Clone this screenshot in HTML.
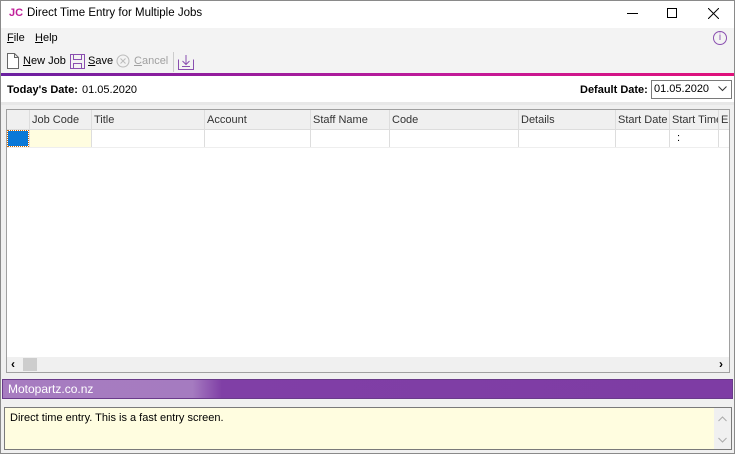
<!DOCTYPE html>
<html><head><style>
*{margin:0;padding:0;box-sizing:border-box}
body{width:735px;height:454px;overflow:hidden;background:#f0f0f0;font-family:"Liberation Sans",sans-serif;font-size:11px;color:#000;position:relative}
.a{position:absolute}
u{text-decoration:underline}
</style></head><body>
<div class="a" style="left:0;top:0;width:735px;height:28px;background:#fff"></div>
<div class="a" style="left:9px;top:7px;font-weight:bold;color:#c0209a;font-size:11px">JC</div>
<div class="a" style="left:27px;top:7px;font-size:11.5px">Direct Time Entry for Multiple Jobs</div>
<div class="a" style="left:627px;top:13px;width:11px;height:1px;background:#000"></div>
<div class="a" style="left:667px;top:8px;width:10px;height:10px;border:1px solid #000"></div>
<svg class="a" style="left:708px;top:8px" width="11" height="11"><path d="M0 0L11 11M11 0L0 11" stroke="#000"/></svg>
<div class="a" style="left:0;top:28px;width:735px;height:45px;background:#f3f3f3"></div>
<div class="a" style="left:7px;top:32px"><u>F</u>ile</div>
<div class="a" style="left:35px;top:32px"><u>H</u>elp</div>
<div class="a" style="left:713px;top:31px;width:14px;height:14px;border:1px solid #8a4fb0;border-radius:50%;color:#8a4fb0;font-size:10px;text-align:center;line-height:12px">i</div>
<svg class="a" style="left:7px;top:53px" width="12" height="16"><path d="M.5 .5H7.5L11.5 4.5V15.5H.5Z M7.5 .5V4.5H11.5" fill="#fff" stroke="#666"/></svg>
<div class="a" style="left:23px;top:55px"><u>N</u>ew Job</div>
<svg class="a" style="left:70px;top:54px" width="15" height="15"><path d="M.5 .5H14.5V14.5H.5Z M3.5 .5V5.5H11.5V.5 M3.5 14.5V9.5H11.5V14.5" fill="none" stroke="#8a4fb0"/></svg>
<div class="a" style="left:88px;top:55px"><u>S</u>ave</div>
<svg class="a" style="left:116px;top:54px" width="14" height="14"><circle cx="7" cy="7" r="6" fill="none" stroke="#bbb"/><path d="M4.5 4.5L9.5 9.5M9.5 4.5L4.5 9.5" stroke="#bbb"/></svg>
<div class="a" style="left:134px;top:55px;color:#a0a0a0"><u>C</u>ancel</div>
<div class="a" style="left:173px;top:52px;width:1px;height:20px;background:#ccc"></div>
<svg class="a" style="left:178px;top:54px" width="16" height="16"><path d="M.5 5.5V15.5H15.5V5.5 M8 1V10 M4.5 7L8 10.5L11.5 7 M4 12.5H12" fill="none" stroke="#8a4fb0"/></svg>
<div class="a" style="left:0;top:73px;width:735px;height:3px;background:linear-gradient(90deg,#6a1fa0,#c01a9a 60%,#e0107a)"></div>
<div class="a" style="left:0;top:76px;width:735px;height:26px;background:#fff"></div>
<div class="a" style="left:7px;top:84px;font-weight:bold">Today's Date:</div>
<div class="a" style="left:82px;top:84px">01.05.2020</div>
<div class="a" style="left:580px;top:84px;font-weight:bold">Default Date:</div>
<div class="a" style="left:651px;top:80px;width:81px;height:19px;border:1px solid #7a7a7a;background:#fff;padding:2px 0 0 2px">01.05.2020</div>
<svg class="a" style="left:718px;top:86px" width="9" height="6"><path d="M.5 .5L4.5 4.5L8.5 .5" fill="none" stroke="#333"/></svg>
<div class="a" style="left:0;top:102px;width:735px;height:3px;background:#e8e8e8"></div>
<div class="a" style="left:6px;top:109px;width:724px;height:264px;border:1px solid #a0a0a0;background:#fff;overflow:hidden">
 <div class="a" style="left:0;top:0;width:722px;height:20px;background:#f0f0f0;border-bottom:1px solid #ddd"></div>
 <div class="a" style="left:0;top:20px;width:722px;height:18px;border-bottom:1px solid #eee"></div>
 <div class="a" style="left:23px;top:20px;width:62px;height:17px;background:#fffde0"></div>
 <div class="a" style="left:1px;top:21px;width:20px;height:15px;background:#0a78d7;outline:1px dotted #c60"></div>
</div>
<div class="a" style="left:29px;top:110px;width:1px;height:37px;background:#ddd"></div>
<div class="a" style="left:91px;top:110px;width:1px;height:37px;background:#ddd"></div>
<div class="a" style="left:204px;top:110px;width:1px;height:37px;background:#ddd"></div>
<div class="a" style="left:310px;top:110px;width:1px;height:37px;background:#ddd"></div>
<div class="a" style="left:389px;top:110px;width:1px;height:37px;background:#ddd"></div>
<div class="a" style="left:518px;top:110px;width:1px;height:37px;background:#ddd"></div>
<div class="a" style="left:615px;top:110px;width:1px;height:37px;background:#ddd"></div>
<div class="a" style="left:669px;top:110px;width:1px;height:37px;background:#ddd"></div>
<div class="a" style="left:718px;top:110px;width:1px;height:37px;background:#ddd"></div>
<div class="a" style="left:32px;top:114px;color:#333">Job Code</div>
<div class="a" style="left:94px;top:114px;color:#333">Title</div>
<div class="a" style="left:207px;top:114px;color:#333">Account</div>
<div class="a" style="left:313px;top:114px;color:#333">Staff Name</div>
<div class="a" style="left:392px;top:114px;color:#333">Code</div>
<div class="a" style="left:521px;top:114px;color:#333">Details</div>
<div class="a" style="left:618px;top:114px;color:#333">Start Date</div>
<div class="a" style="left:672px;top:114px;width:46px;overflow:hidden;white-space:nowrap;color:#333">Start Time</div>
<div class="a" style="left:721px;top:114px;width:8px;overflow:hidden;color:#333">En</div>
<div class="a" style="left:677px;top:132px">:</div>
<div class="a" style="left:7px;top:357px;width:722px;height:15px;background:#f0f0f0"></div>
<div class="a" style="left:11px;top:357px;font-size:12px;font-weight:bold">&lsaquo;</div>
<div class="a" style="left:23px;top:358px;width:14px;height:13px;background:#cdcdcd"></div>
<div class="a" style="left:719px;top:357px;font-size:12px;font-weight:bold">&rsaquo;</div>
<div class="a" style="left:2px;top:379px;width:731px;height:20px;background:linear-gradient(90deg,#a77cc0,#a57bc0 26%,#803fa6 30%,#7e3ca4);border:1px solid #6a3a8a"></div>
<div class="a" style="left:8px;top:382px;color:#fff;font-size:12px">Motopartz.co.nz</div>
<div class="a" style="left:4px;top:407px;width:728px;height:43px;background:#fffde0;border:1px solid #7a7a7a"></div>
<div class="a" style="left:10px;top:412px">Direct time entry. This is a fast entry screen.</div>
<div class="a" style="left:714px;top:408px;width:17px;height:41px;background:#f0f0f0"></div>
<svg class="a" style="left:718px;top:416px" width="9" height="6"><path d="M.5 5L4.5 1L8.5 5" fill="none" stroke="#aaa"/></svg>
<svg class="a" style="left:718px;top:437px" width="9" height="6"><path d="M.5 1L4.5 5L8.5 1" fill="none" stroke="#aaa"/></svg>
<div class="a" style="left:0;top:0;width:735px;height:454px;border:1px solid #8a8a8a;pointer-events:none"></div>
</body></html>
